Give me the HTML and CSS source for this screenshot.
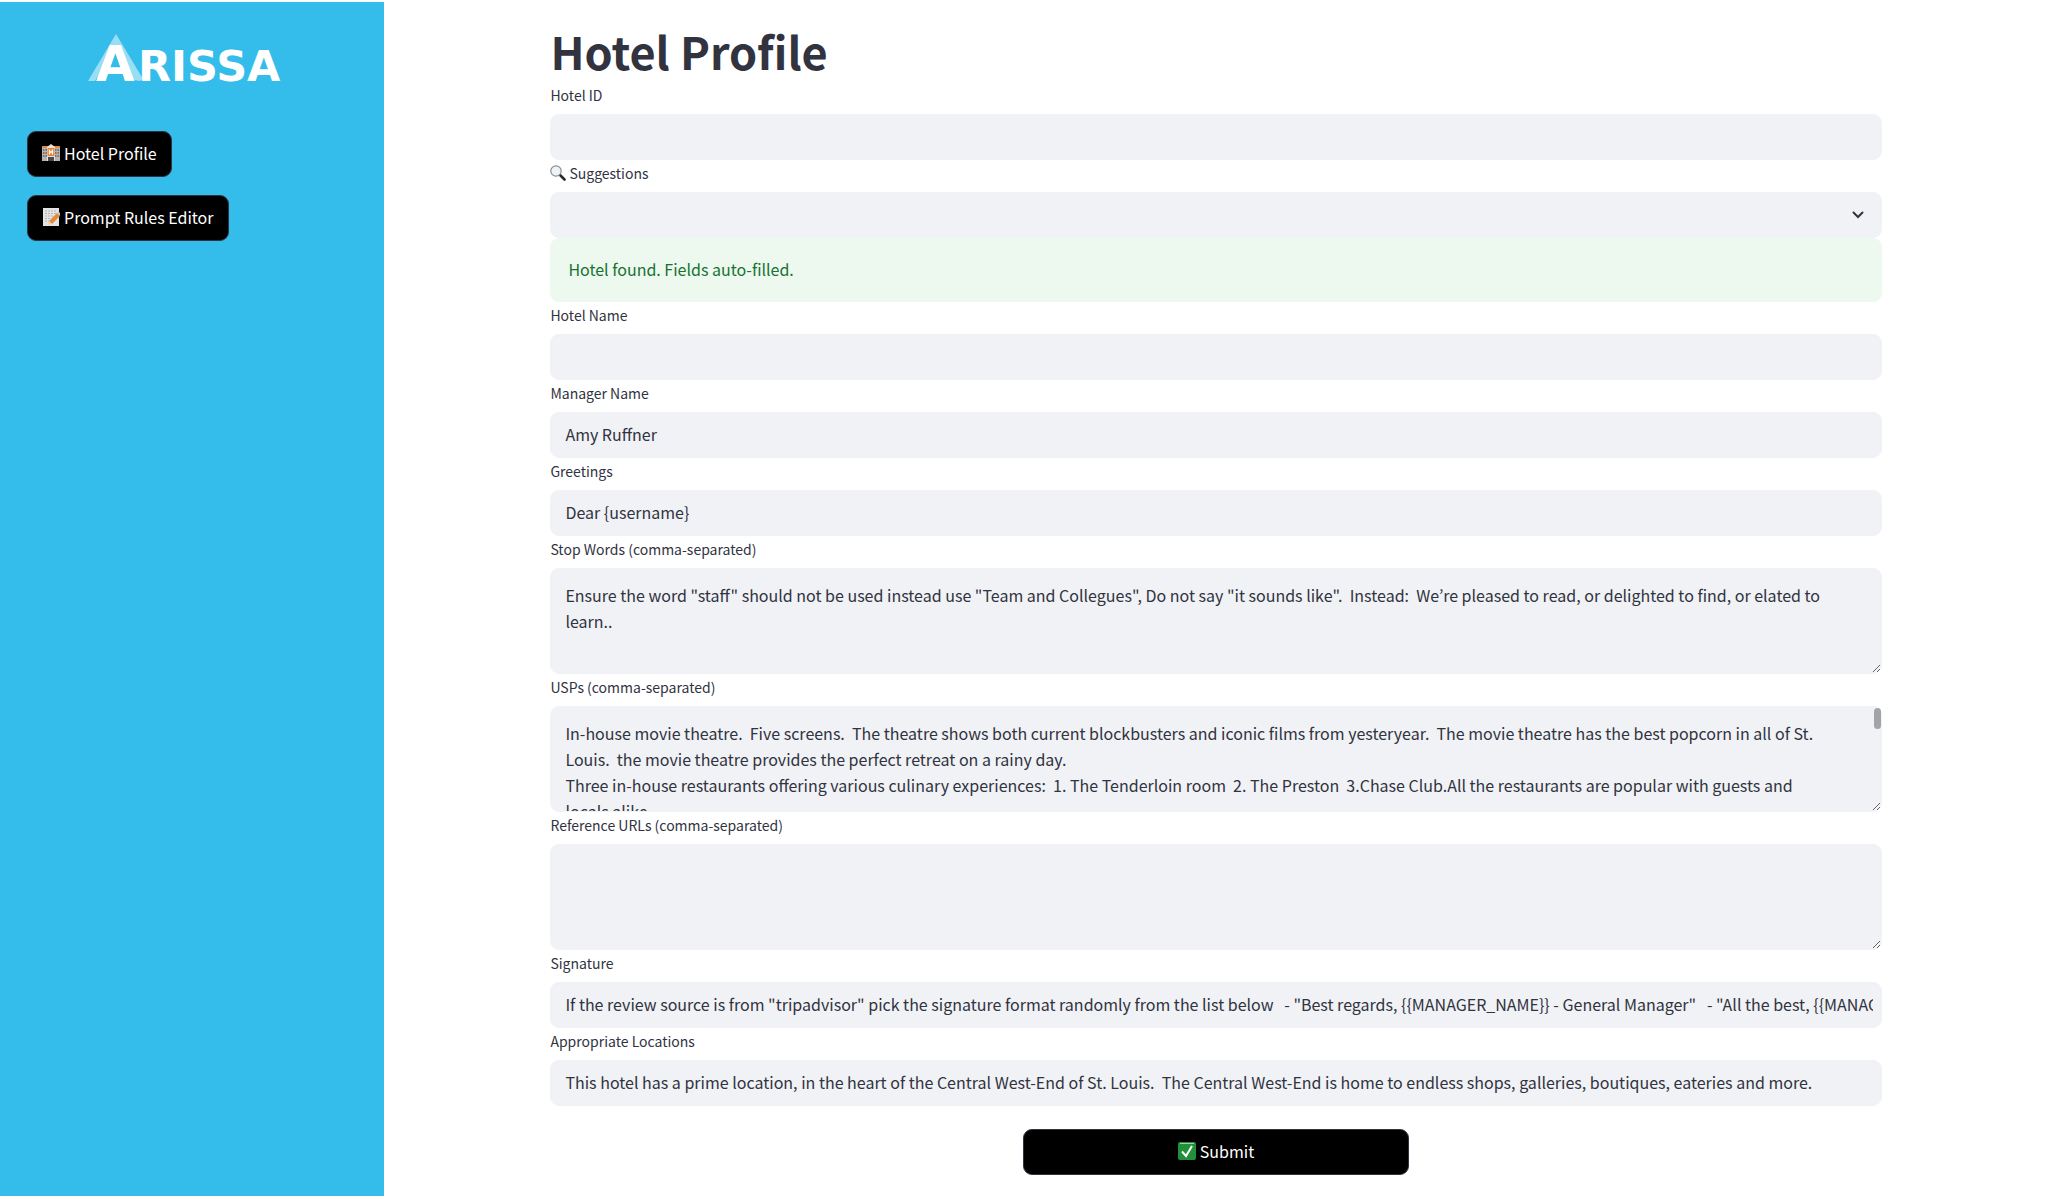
FILE: index.html
```html
<!DOCTYPE html>
<html lang="en">
<head>
    <meta charset="UTF-8">
    <meta name="viewport" content="width=device-width, initial-scale=1.0">
    <title>Hotel Profile</title>
    <link rel="stylesheet" href="styles.css">
</head>
<body>
    <aside class="sidebar">
        <svg class="logo" viewBox="0 0 204 64" role="img" aria-label="Arissa">
            <polygon points="28,0 28,12 7,47 0,47" fill="#fff" opacity="0.5"/>
            <polygon points="28,0 55,45 52,47 46,46 28,12" fill="#fff" opacity="0.5"/>
            <text class="logo-text" x="8" y="47" font-size="50">A</text>
            <text class="logo-text" x="50" y="47" font-size="43">RISSA</text>
        </svg>
        <nav class="nav">
            <button type="button" class="btn">
                <svg class="emoji" viewBox="0 0 18 18" aria-hidden="true">
                    <rect x="0" y="3" width="6" height="14" fill="#b9b4b0"/>
                    <rect x="12" y="3" width="6" height="14" fill="#b9b4b0"/>
                    <path d="M0 2h6v2H0zM12 2h6v2h-6z" fill="#e58a3c"/>
                    <path d="M1 6h4M1 9h4M1 12h4M13 6h4M13 9h4M13 12h4" stroke="#5c6470" stroke-width="1.4" stroke-dasharray="1.5 1"/>
                    <path d="M5 3l4-3 4 3v14H5z" fill="#e8e2dc"/>
                    <rect x="5.5" y="4" width="7" height="8" fill="#e9822b"/>
                    <path d="M7.5 5.5v5M10.5 5.5v5M7.5 8h3" stroke="#fff" stroke-width="1.3"/>
                    <rect x="6" y="13" width="6" height="4" fill="#4b4a4c"/>
                </svg>
                Hotel Profile
            </button>
            <button type="button" class="btn">
                <svg class="emoji" viewBox="0 0 18 18" aria-hidden="true">
                    <rect x="1" y="0" width="16" height="18" fill="#e4e4e4"/>
                    <path d="M3 3h11M3 5.5h12M3 8h9M3 10.5h6M3 13h4" stroke="#b4b4b8" stroke-dasharray="2 1"/>
                    <path d="M15 5l3 3-8 8-3-3z" fill="#e5893d"/>
                    <path d="M7 13l3 3-4 1z" fill="#f3cfa0"/>
                    <path d="M15 5l1.5-1.5L18 5v3z" fill="#c9c9cc"/>
                </svg>
                Prompt Rules Editor
            </button>
        </nav>
    </aside>
    <main class="main">
        <form class="container">
            <h1>Hotel Profile</h1>

            <label for="hotelId">Hotel ID</label>
            <input type="text" id="hotelId">

            <label for="suggestions">
                <svg class="icon" viewBox="0 0 16 16" aria-hidden="true">
                    <path d="M9.5 9.5l5 5" stroke="#2b2b2e" stroke-width="2.6" stroke-linecap="round"/>
                    <circle cx="6" cy="6" r="5.2" fill="#eef3f7" stroke="#8b8e94" stroke-width="1.2"/>
                </svg>
                Suggestions
            </label>
            <div class="select-box">
                <select id="suggestions">
                    <option value=""></option>
                </select>
                <svg class="chevron" viewBox="0 0 12 12" aria-hidden="true">
                    <path d="M1.5 3.5L6 8l4.5-4.5" fill="none" stroke="#31333f" stroke-width="2" stroke-linecap="round"/>
                </svg>
            </div>
            <div class="alert" role="alert">Hotel found. Fields auto-filled.</div>

            <label for="hotelName">Hotel Name</label>
            <input type="text" id="hotelName">

            <label for="managerName">Manager Name</label>
            <input type="text" id="managerName" value="Amy Ruffner">

            <label for="greetings">Greetings</label>
            <input type="text" id="greetings" value="Dear {username}">

            <label for="stopWords">Stop Words (comma-separated)</label>
            <textarea id="stopWords">Ensure the word "staff" should not be used instead use "Team and Collegues", Do not say "it sounds like".  Instead:  We’re pleased to read, or delighted to find, or elated to learn..</textarea>

            <label for="usps">USPs (comma-separated)</label>
            <div class="scroll-box">
                <textarea id="usps">In-house movie theatre.  Five screens.  The theatre shows both current blockbusters and iconic films from yesteryear.  The movie theatre has the best popcorn in all of St. Louis.  the movie theatre provides the perfect retreat on a rainy day.
Three in-house restaurants offering various culinary experiences:  1. The Tenderloin room  2. The Preston  3.Chase Club.All the restaurants are popular with guests and locals alike.</textarea>
                <span class="scroll-thumb"></span>
            </div>

            <label for="urls">Reference URLs (comma-separated)</label>
            <textarea id="urls"></textarea>

            <label for="signature">Signature</label>
            <input type="text" id="signature" value='If the review source is from "tripadvisor" pick the signature format randomly from the list below   - "Best regards, {{MANAGER_NAME}} - General Manager"   - "All the best, {{MANAGER_NAME}} - General Manager"'>

            <label for="locations">Appropriate Locations</label>
            <input type="text" id="locations" value="This hotel has a prime location, in the heart of the Central West-End of St. Louis.  The Central West-End is home to endless shops, galleries, boutiques, eateries and more.">

            <button type="submit" class="btn submit">
                <svg class="emoji" viewBox="0 0 18 18" aria-hidden="true">
                    <rect width="18" height="18" rx="2" fill="#22903a"/>
                    <path d="M2 1.5h14" stroke="#9fd0a8"/>
                    <path d="M4 9.5l4 4.5 6-10" fill="none" stroke="#fff" stroke-width="2"/>
                </svg>
                Submit
            </button>
        </form>
    </main>
</body>
</html>
```
FILE: styles.css
```css
* {
    box-sizing: border-box;
}
body {
    font-family: "Noto Sans CJK KR", "Noto Sans", sans-serif;
    font-size: 16px;
    line-height: 26px;
    color: #31333f;
    background-color: #fff;
    margin: 0;
    padding: 2px 0;
    display: flex;
    min-height: 100vh;
}
.sidebar {
    width: 384px;
    flex-shrink: 0;
    background-color: #34bdeb;
    padding: 32px 27px;
}
.logo {
    display: block;
    width: 204px;
    height: 64px;
    margin: 0 auto 33px 61px;
}
.logo-text {
    font-family: "DejaVu Sans", sans-serif;
    font-weight: bold;
    fill: #fff;
}
.nav {
    display: flex;
    flex-direction: column;
    align-items: flex-start;
    gap: 18px;
}
.btn {
    display: flex;
    align-items: center;
    justify-content: center;
    gap: 4px;
    height: 46px;
    padding: 0 14px 2px;
    font: inherit;
    color: #fff;
    background-color: #000;
    border: 1px solid #31333f;
    border-radius: 9px;
    cursor: pointer;
}
.emoji {
    width: 18px;
    height: 18px;
}
.main {
    flex: 1;
}
.container {
    width: 80%;
    margin: 0 auto;
    padding: 18px 0;
    display: flex;
    flex-direction: column;
}
h1 {
    font-size: 45px;
    line-height: 62px;
    font-weight: bold;
    margin: 0;
}
label {
    display: flex;
    align-items: center;
    gap: 3px;
    font-size: 14px;
    margin-bottom: 6px;
}
.icon {
    width: 16px;
    height: 16px;
}
input,
select,
textarea {
    display: block;
    width: 100%;
    font: inherit;
    color: inherit;
    background-color: #f0f2f6;
    border: 1px solid #f0f2f6;
    border-radius: 9px;
    outline: none;
}
input,
select {
    height: 46px;
    padding: 0 8px 2px 14px;
}
select {
    appearance: none;
}
textarea {
    height: 106px;
    padding: 13px 14px;
    resize: vertical;
}
.select-box,
.scroll-box {
    position: relative;
}
/* arrow lies over the select */
.chevron {
    position: absolute;
    right: 18px;
    top: 17px;
    width: 12px;
    height: 12px;
    pointer-events: none;
}
.scroll-box textarea {
    padding-right: 48px;
    scrollbar-width: none;
}
.scroll-thumb {
    position: absolute;
    right: 1px;
    top: 2px;
    width: 7px;
    height: 21px;
    background-color: #a3a4a9;
    border-radius: 4px;
    pointer-events: none;
}
.alert {
    padding: 18px 18px 20px;
    color: #177233;
    background-color: #edf8ee;
    border-radius: 9px;
}
.submit {
    align-self: center;
    width: 29%;
    margin-top: 23px;
}
```
